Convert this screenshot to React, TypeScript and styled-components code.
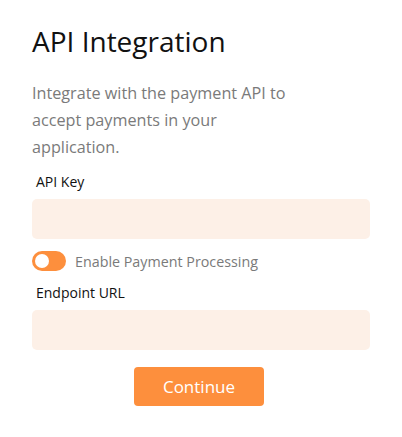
import styled, { createGlobalStyle } from "styled-components";

const GlobalStyle = createGlobalStyle`
  body {
    margin: 0;
    background: #ffffff;
    font-family: "Open Sans", "Noto Sans", sans-serif;
  }
`;

const Wrapper = styled.div`
  display: flex;
  flex-direction: column;
  padding: 20px 32px 30px 32px;
`;

const Title = styled.h1`
  margin: 0;
  font-size: 28px;
  font-weight: 400;
  line-height: 42px;
  color: #111111;
`;

const Description = styled.p`
  margin: 18px 0 0 0;
  max-width: 262px;
  font-size: 16.2px;
  line-height: 27px;
  color: #7a7a7a;
`;

const Label = styled.label<{ $top: number }>`
  display: block;
  margin: ${(p) => p.$top}px 0 0 4px;
  font-size: 14px;
  font-weight: 500;
  line-height: 26px;
  color: #111111;
`;

const Input = styled.input`
  margin-top: 4px;
  height: 38px;
  border: none;
  outline: none;
  border-radius: 5px;
  background: #fdf0e7;
`;

const ToggleRow = styled.div`
  display: flex;
  align-items: center;
  gap: 9px;
  margin-top: 12px;
`;

const Toggle = styled.div`
  position: relative;
  width: 34px;
  height: 20px;
  border-radius: 10px;
  background: #fd8f3d;
`;

const Knob = styled.span`
  position: absolute;
  left: 3px;
  top: 3px;
  width: 14px;
  height: 14px;
  border-radius: 50%;
  background: #ffffff;
`;

const ToggleText = styled.span`
  font-size: 14.3px;
  color: #7a7a7a;
`;

const Button = styled.button`
  align-self: center;
  margin: 17px 4px 0 0;
  width: 130px;
  height: 39px;
  border: none;
  border-radius: 4px;
  background: #fd8f3d;
  color: #ffffff;
  font-family: inherit;
  font-size: 17px;
`;

export default function App() {
  return (
    <>
      <GlobalStyle />
      <Wrapper>
        <Title>API Integration</Title>
        <Description>
          Integrate with the payment API to accept payments in your application.
        </Description>
        <Label $top={8}>API Key</Label>
        <Input />
        <ToggleRow>
          <Toggle>
            <Knob />
          </Toggle>
          <ToggleText>Enable Payment Processing</ToggleText>
        </ToggleRow>
        <Label $top={9}>Endpoint URL</Label>
        <Input />
        <Button>Continue</Button>
      </Wrapper>
    </>
  );
}
